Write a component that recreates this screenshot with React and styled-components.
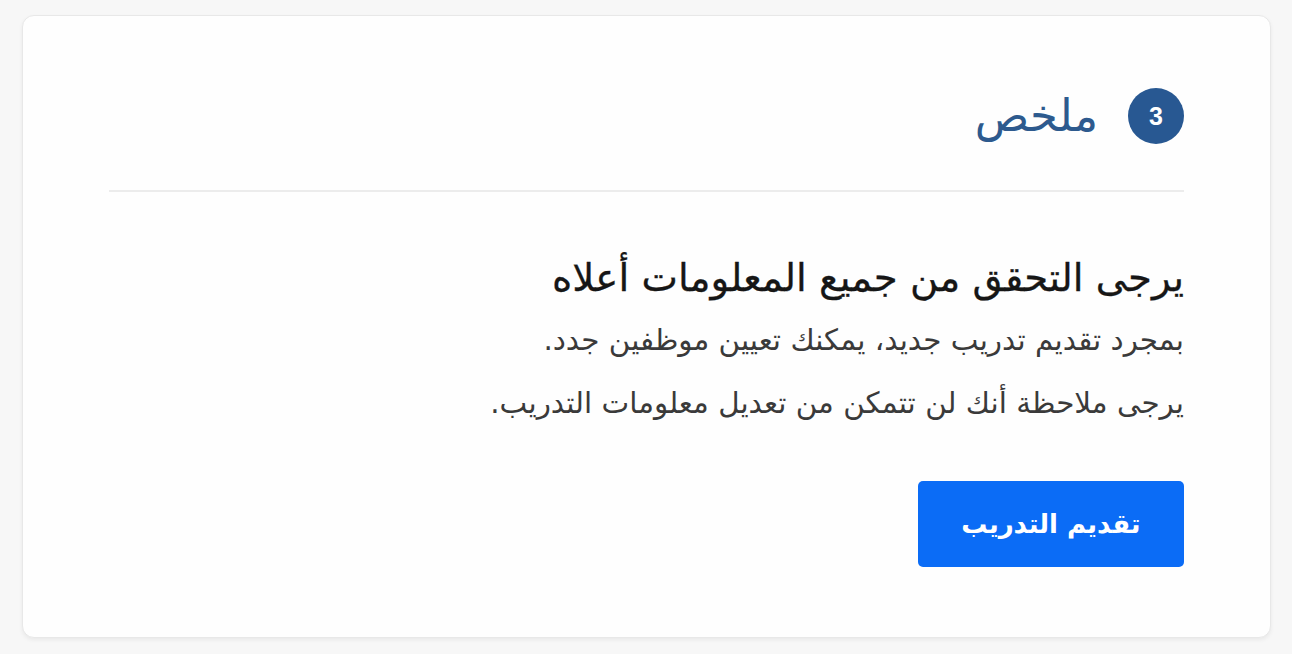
import React from "react";
import styled, { createGlobalStyle } from "styled-components";

const Global = createGlobalStyle`
  html, body { margin: 0; padding: 0; background: #f7f7f7; }
  body { font-family: "DejaVu Sans", "Noto Sans", sans-serif; }
`;

const Page = styled.div`
  width: 1292px;
  height: 654px;
  box-sizing: border-box;
  padding: 15px 21px 16px 22px;
  background: #f7f7f7;
`;

const Card = styled.section`
  direction: rtl;
  box-sizing: border-box;
  height: 623px;
  background: #fefefe;
  border: 1px solid #e8e8e8;
  border-radius: 12px;
  box-shadow: 0 2px 4px rgba(0, 0, 0, 0.06);
  padding: 72px 86px 0 86px;
`;

const Header = styled.div`
  display: flex;
  align-items: center;
  gap: 30px;
  padding-bottom: 46px;
  border-bottom: 2px solid #ececec;
`;

const StepBadge = styled.span`
  flex: none;
  width: 56px;
  height: 56px;
  border-radius: 50%;
  background: #285892;
  color: #fff;
  display: flex;
  align-items: center;
  justify-content: center;
  font-family: "Liberation Sans", Arial, sans-serif;
  font-weight: 700;
  font-size: 25px;
`;

const Title = styled.h2`
  margin: 0;
  font-size: 45px;
  line-height: 56px;
  font-weight: 400;
  color: #2d5a8e;
`;

const Body = styled.div`
  padding-top: 62px;
`;

const Heading = styled.h3`
  margin: 0 0 18px;
  font-size: 38.7px;
  line-height: 48px;
  font-weight: 400;
  color: #161616;
  -webkit-text-stroke: 0.3px #161616;
`;

const Text = styled.p`
  margin: 0 0 23px;
  font-size: 29.4px;
  line-height: 40px;
  color: #3a3a3a;
`;

const SubmitButton = styled.button`
  margin-top: 35px;
  width: 266px;
  height: 86px;
  border: none;
  border-radius: 5px;
  background: #0b6cf6;
  color: #fff;
  font-family: inherit;
  font-size: 26px;
  font-weight: 600;
  cursor: pointer;
`;

export default function App() {
  return (
    <Page>
      <Global />
      <Card>
        <Header>
          <StepBadge>3</StepBadge>
          <Title>ملخص</Title>
        </Header>
        <Body>
          <Heading>يرجى التحقق من جميع المعلومات أعلاه</Heading>
          <Text>بمجرد تقديم تدريب جديد، يمكنك تعيين موظفين جدد.</Text>
          <Text>يرجى ملاحظة أنك لن تتمكن من تعديل معلومات التدريب.</Text>
          <SubmitButton>تقديم التدريب</SubmitButton>
        </Body>
      </Card>
    </Page>
  );
}
